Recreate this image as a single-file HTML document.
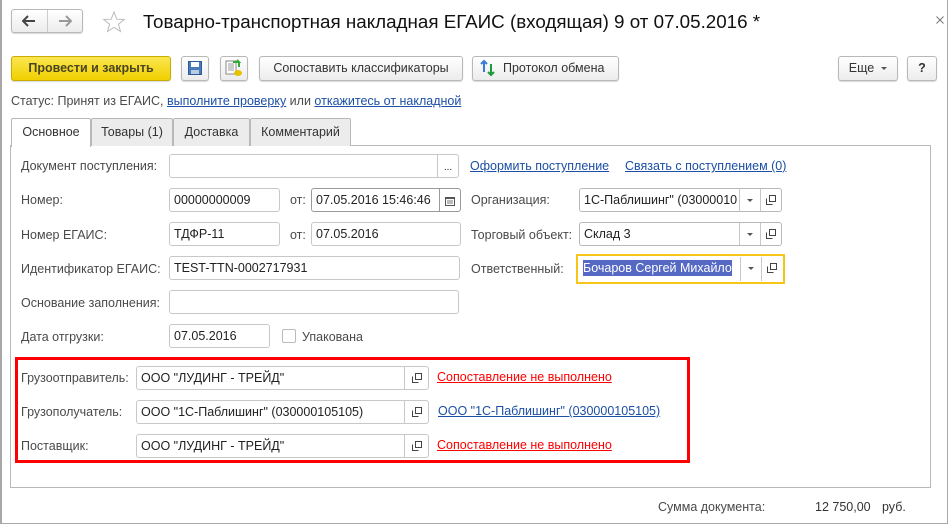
<!DOCTYPE html>
<html><head><meta charset="utf-8"><style>
*{box-sizing:border-box;margin:0;padding:0}
body{width:949px;height:525px;background:#fff;font-family:"Liberation Sans",Arial,sans-serif;font-size:12.5px;color:#404040;position:relative;overflow:hidden}
.a{position:absolute;white-space:nowrap}
.win{position:absolute;left:0;top:0;width:948px;height:524px;border:1px solid #a8a8a8;border-top:none;border-left:2px solid #a8a8a8}
.btn{position:absolute;border:1px solid #b8b8b8;border-radius:3px;background:linear-gradient(#fff,#ececec);box-shadow:0 1px 1px rgba(0,0,0,.15);text-align:center;line-height:23px;color:#333;font-size:12.5px}
.inp{position:absolute;border:1px solid #c8c8c8;border-radius:3px;background:#fff;height:24px;line-height:23px;padding-left:4px;color:#222;font-size:12.5px;overflow:hidden;white-space:nowrap}
.dd{position:absolute;top:0;bottom:0;width:21px;border-left:1px solid #c8c8c8;text-align:center}
.lbl{position:absolute;white-space:nowrap;color:#4a4a4a}
.lnk{position:absolute;white-space:nowrap;color:#1c4fa5;text-decoration:underline}
.red{position:absolute;white-space:nowrap;color:#f00;text-decoration:underline}
.tab{position:absolute;top:118px;height:28px;border:1px solid #b8b8b8;border-bottom:none;background:#ececec;line-height:26px;text-align:center;color:#333;border-radius:2px 2px 0 0}
.tri{display:inline-block;width:0;height:0;border-left:3px solid transparent;border-right:3px solid transparent;border-top:3px solid #555;vertical-align:middle}
</style></head><body>
<div class="win"></div>
<!-- nav -->
<div class="btn" style="left:11px;top:9px;width:72px;height:24px;"></div>
<div class="a" style="left:47px;top:10px;width:1px;height:22px;background:#ccc"></div>
<svg class="a" style="left:22px;top:15px" width="14" height="12"><path d="M1 6H13M6 1L1 6L6 11" stroke="#444" stroke-width="2" fill="none"/></svg>
<svg class="a" style="left:58px;top:15px" width="14" height="12"><path d="M1 6H13M8 1L13 6L8 11" stroke="#999" stroke-width="2" fill="none"/></svg>
<svg class="a" style="left:102px;top:10px" width="24" height="24"><path d="M12 2L14.8 9.2L22.3 9.5L16.4 14.2L18.5 21.5L12 17.3L5.5 21.5L7.6 14.2L1.7 9.5L9.2 9.2Z" fill="none" stroke="#bbb" stroke-width="1"/></svg>
<div class="a" style="left:143px;top:11px;font-size:18.8px;color:#111">Товарно-транспортная накладная ЕГАИС (входящая) 9 от 07.05.2016 *</div>
<svg class="a" style="left:936px;top:16px" width="8" height="8"><path d="M0.5 0.5L7.5 7.5M7.5 0.5L0.5 7.5" stroke="#777"/></svg>
<!-- toolbar -->
<div class="btn" style="left:11px;top:56px;width:160px;height:25px;background:linear-gradient(#fbe650,#f0d000);border-color:#c9ad00;font-weight:bold;color:#4a4420">Провести и закрыть</div>
<div class="btn" style="left:181px;top:56px;width:28px;height:25px"></div>
<svg class="a" style="left:188px;top:61px" width="14" height="14"><rect x="0.5" y="0.5" width="13" height="13" fill="#4c7ab8" stroke="#2f5a96"/><rect x="3" y="1" width="8" height="5" fill="#fff"/><rect x="3" y="9" width="8" height="4" fill="#b8cce4"/></svg>
<div class="btn" style="left:220px;top:56px;width:28px;height:25px"></div>
<svg class="a" style="left:225px;top:59px" width="18" height="18"><rect x="1" y="2" width="10" height="13" fill="#fff" stroke="#888"/><path d="M3 5h6M3 7h6M3 9h6M3 11h6" stroke="#999"/><path d="M8 3h6l-2 -2M14 3v5" stroke="#3a3" stroke-width="2" fill="none"/><ellipse cx="13" cy="14" rx="4" ry="3" fill="#e6c200"/></svg>
<div class="btn" style="left:259px;top:56px;width:204px;height:25px">Сопоставить классификаторы</div>
<div class="btn" style="left:472px;top:56px;width:147px;height:25px;text-align:left;padding-left:30px">Протокол обмена</div>
<svg class="a" style="left:479px;top:59px" width="18" height="18"><path d="M5 2v11M2 5l3-3 3 3" stroke="#3a7bd5" stroke-width="2" fill="none"/><path d="M12 5v11M9 13l3 3 3-3" stroke="#1a9a3a" stroke-width="2" fill="none"/></svg>
<div class="btn" style="left:838px;top:56px;width:60px;height:25px">Еще &nbsp;<span class="tri"></span></div>
<div class="btn" style="left:907px;top:56px;width:30px;height:25px;font-weight:bold">?</div>
<!-- status -->
<div class="lbl" style="left:11px;top:94px">Статус: Принят из ЕГАИС, <span style="color:#1c4fa5;text-decoration:underline">выполните проверку</span> или <span style="color:#1c4fa5;text-decoration:underline">откажитесь от накладной</span></div>
<!-- tabs -->
<div class="a" style="left:10px;top:145px;width:921px;height:343px;border:1px solid #b8b8b8"></div>
<div class="tab" style="left:91px;width:82px">Товары (1)</div>
<div class="tab" style="left:173px;width:77px">Доставка</div>
<div class="tab" style="left:250px;width:101px">Комментарий</div>
<div class="tab" style="left:11px;width:80px;height:29px;background:#fff">Основное</div>
<!-- left rows -->
<div class="lbl" style="left:21px;top:159px">Документ поступления:</div>
<div class="inp" style="left:169px;top:154px;width:290px"><div class="dd" style="right:0;font-size:10px;line-height:26px">...</div></div>
<div class="lnk" style="left:470px;top:159px">Оформить поступление</div>
<div class="lnk" style="left:625px;top:159px">Связать с поступлением (0)</div>

<div class="lbl" style="left:21px;top:193px">Номер:</div>
<div class="inp" style="left:169px;top:188px;width:111px">00000000009</div>
<div class="lbl" style="left:290px;top:193px">от:</div>
<div class="inp" style="left:311px;top:188px;width:150px;border-color:#999">07.05.2016 15:46:46<div class="dd" style="right:0;border-color:#999"><svg width="10" height="10" style="margin-top:7px"><rect x="0.5" y="1.5" width="9" height="8" fill="none" stroke="#555"/><rect x="0" y="1" width="10" height="2" fill="#555"/><path d="M2 5h6M2 7h6" stroke="#777"/></svg></div></div>
<div class="lbl" style="left:471px;top:193px">Организация:</div>
<div class="inp" style="left:579px;top:188px;width:203px;border-color:#b8b8b8">1С-Паблишинг" (03000010<div class="dd" style="right:21px;line-height:22px;background:#fff"><span class="tri"></span></div><div class="dd" style="right:0"><svg width="10" height="10" style="margin-top:6px"><rect x="3.5" y="0.5" width="6" height="6" fill="none" stroke="#444"/><path d="M0.5 3.5v6h6" fill="none" stroke="#444"/></svg></div></div>

<div class="lbl" style="left:21px;top:228px">Номер ЕГАИС:</div>
<div class="inp" style="left:169px;top:222px;width:111px">ТДФР-11</div>
<div class="lbl" style="left:290px;top:228px">от:</div>
<div class="inp" style="left:311px;top:222px;width:150px">07.05.2016</div>
<div class="lbl" style="left:471px;top:228px">Торговый объект:</div>
<div class="inp" style="left:579px;top:222px;width:203px;border-color:#b8b8b8">Склад 3<div class="dd" style="right:21px;background:#fff"><span class="tri"></span></div><div class="dd" style="right:0"><svg width="10" height="10" style="margin-top:6px"><rect x="3.5" y="0.5" width="6" height="6" fill="none" stroke="#444"/><path d="M0.5 3.5v6h6" fill="none" stroke="#444"/></svg></div></div>

<div class="lbl" style="left:21px;top:262px">Идентификатор ЕГАИС:</div>
<div class="inp" style="left:169px;top:256px;width:291px">TEST-TTN-0002717931</div>
<div class="lbl" style="left:471px;top:262px">Ответственный:</div>
<div class="a" style="left:576px;top:254px;width:209px;height:30px;border:2px solid #f5c518"></div>
<div class="inp" style="left:579px;top:257px;width:203px;border:none;padding-left:4px"><span style="background:#5468c4;color:#fff;padding:1px 0">Бочаров Сергей Михайло</span><div class="dd" style="right:21px;background:#fff"><span class="tri"></span></div><div class="dd" style="right:0"><svg width="10" height="10" style="margin-top:6px"><rect x="3.5" y="0.5" width="6" height="6" fill="none" stroke="#444"/><path d="M0.5 3.5v6h6" fill="none" stroke="#444"/></svg></div></div>

<div class="lbl" style="left:21px;top:296px">Основание заполнения:</div>
<div class="inp" style="left:169px;top:290px;width:290px"></div>

<div class="lbl" style="left:21px;top:330px">Дата отгрузки:</div>
<div class="inp" style="left:169px;top:324px;width:101px">07.05.2016</div>
<div class="a" style="left:282px;top:329px;width:14px;height:14px;border:1px solid #bbb;border-radius:2px"></div>
<div class="lbl" style="left:302px;top:330px">Упакована</div>

<!-- red box -->
<div class="a" style="left:15px;top:357px;width:675px;height:106px;border:3px solid #f00"></div>
<div class="lbl" style="left:21px;top:371px">Грузоотправитель:</div>
<div class="inp" style="left:136px;top:366px;width:293px">ООО "ЛУДИНГ - ТРЕЙД"<div class="dd" style="right:0;width:24px"><svg width="10" height="10" style="margin-top:6px"><rect x="3.5" y="0.5" width="6" height="6" fill="none" stroke="#444"/><path d="M0.5 3.5v6h6" fill="none" stroke="#444"/></svg></div></div>
<div class="red" style="left:437px;top:370px">Сопоставление не выполнено</div>
<div class="lbl" style="left:21px;top:405px">Грузополучатель:</div>
<div class="inp" style="left:136px;top:400px;width:293px">ООО "1С-Паблишинг" (030000105105)<div class="dd" style="right:0;width:24px"><svg width="10" height="10" style="margin-top:6px"><rect x="3.5" y="0.5" width="6" height="6" fill="none" stroke="#444"/><path d="M0.5 3.5v6h6" fill="none" stroke="#444"/></svg></div></div>
<div class="lnk" style="left:438px;top:404px">ООО "1С-Паблишинг" (030000105105)</div>
<div class="lbl" style="left:21px;top:439px">Поставщик:</div>
<div class="inp" style="left:136px;top:434px;width:293px">ООО "ЛУДИНГ - ТРЕЙД"<div class="dd" style="right:0;width:24px"><svg width="10" height="10" style="margin-top:6px"><rect x="3.5" y="0.5" width="6" height="6" fill="none" stroke="#444"/><path d="M0.5 3.5v6h6" fill="none" stroke="#444"/></svg></div></div>
<div class="red" style="left:437px;top:438px">Сопоставление не выполнено</div>

<div class="lbl" style="left:658px;top:500px">Сумма документа:</div>
<div class="lbl" style="left:815px;top:500px;color:#333">12 750,00</div>
<div class="lbl" style="left:882px;top:500px;color:#333">руб.</div>
</body></html>
